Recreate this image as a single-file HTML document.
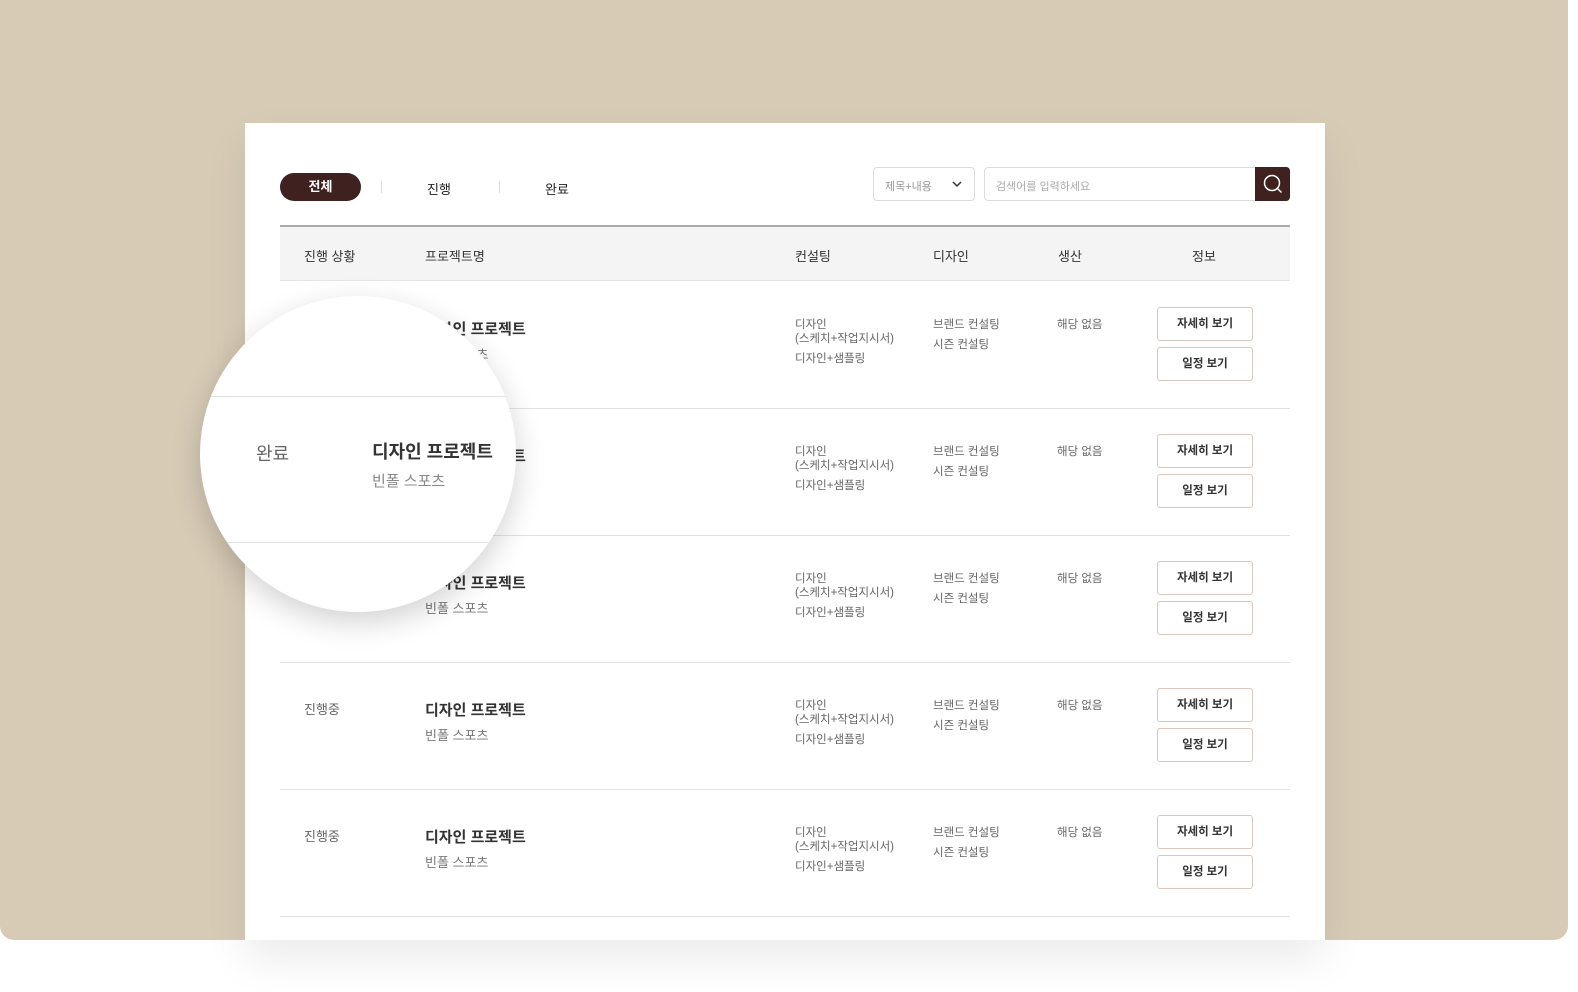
<!DOCTYPE html>
<html><head><meta charset="utf-8"><style>
*{margin:0;padding:0;box-sizing:border-box}
body{width:1578px;height:992px;background:#fff;font-family:"Liberation Sans","Noto Sans CJK KR",sans-serif;position:relative;overflow:hidden;color:#333}
.bg{position:absolute;left:0;top:0;width:1568px;height:940px;background:#d7cbb6;border-radius:0 0 14px 14px}
.panel{position:absolute;left:245px;top:123px;width:1080px;height:817px;background:#fff;box-shadow:0 20px 40px rgba(0,0,0,.08)}
.a{position:absolute;white-space:nowrap}
.tab{font-size:13px;color:#222}
.hdr{position:absolute;left:280px;top:225px;width:1010px;height:56px;background:#f4f4f4;border-top:2px solid #aaa;border-bottom:1px solid #e4e4e4}
.hdr span{position:absolute;top:19px;font-size:13px;color:#333}
.line{position:absolute;left:280px;width:1010px;height:1px;background:#e2e2e2}
.s{font-size:11.5px;color:#666;line-height:14px}
.t{font-size:15px;font-weight:bold;color:#333}
.sub{font-size:13px;color:#777}
.btn{position:absolute;left:1157px;width:96px;height:34px;border:1px solid #d8c8c0;border-radius:3px;font-size:11.5px;font-weight:bold;color:#333;text-align:center;line-height:32px;background:#fff}
.mag{position:absolute;left:200px;top:296px;width:316px;height:316px;border-radius:50%;background:#fff;box-shadow:0 10px 30px rgba(0,0,0,.18);overflow:hidden}
</style></head><body>
<div class="bg"></div>
<div class="panel"></div>
<div class="a" style="left:280px;top:173px;width:81px;height:28px;border-radius:14px;background:#3f2120;color:#fff;font-size:13px;font-weight:bold;text-align:center;line-height:28px">전체</div>
<div class="a" style="left:381px;top:181px;width:1px;height:12px;background:#ddd"></div>
<div class="a" style="left:499px;top:181px;width:1px;height:12px;background:#ddd"></div>
<div class="a tab" style="left:427px;top:179px">진행</div>
<div class="a tab" style="left:545px;top:179px">완료</div>
<div class="a" style="left:873px;top:167px;width:102px;height:34px;border:1px solid #ddd;border-radius:4px;font-size:11px;color:#999;padding:10px 0 0 11px">제목+내용
<svg style="position:absolute;left:77px;top:12px" width="12" height="8" viewBox="0 0 12 8"><path d="M2 2l4 4 4-4" stroke="#333" stroke-width="1.5" fill="none"/></svg></div>
<div class="a" style="left:984px;top:167px;width:306px;height:34px;border:1px solid #ddd;border-radius:4px;font-size:11px;color:#aaa;padding:10px 0 0 11px">검색어를 입력하세요</div>
<div class="a" style="left:1255px;top:167px;width:35px;height:34px;background:#3f2120;border-radius:0 4px 4px 0">
<svg width="35" height="34" viewBox="0 0 35 34"><circle cx="17" cy="16" r="7.5" stroke="#fff" stroke-width="1.5" fill="none"/><path d="M22.5 21.5l4 4" stroke="#fff" stroke-width="1.5"/></svg></div>
<div class="hdr"><span style="left:24px">진행 상황</span><span style="left:145px">프로젝트명</span><span style="left:515px">컨설팅</span><span style="left:653px">디자인</span><span style="left:778px">생산</span><span style="left:912px">정보</span></div>

<div class="line" style="top:408px"></div><div class="line" style="top:535px"></div><div class="line" style="top:662px"></div><div class="line" style="top:789px"></div><div class="line" style="top:916px"></div>

<!-- rows -->
<div id="rows"></div>
<script>
var h='';
[318,445,572,699,826].forEach(function(y,i){
 if(i>=3) h+='<div class="a sub" style="left:304px;top:'+(y-20+20)+'px;font-size:13px;color:#666">진행중</div>';
 h+='<div class="a t" style="left:425px;top:'+(y)+'px">디자인 프로젝트</div>';
 h+='<div class="a sub" style="left:425px;top:'+(y+26)+'px">빈폴 스포츠</div>';
 h+='<div class="a s" style="left:795px;top:'+y+'px">디자인<br>(스케치+작업지시서)<br><span style="display:block;margin-top:6px">디자인+샘플링</span></div>';
 h+='<div class="a s" style="left:933px;top:'+y+'px">브랜드 컨설팅<br><span style="display:block;margin-top:6px">시즌 컨설팅</span></div>';
 h+='<div class="a s" style="left:1057px;top:'+y+'px">해당 없음</div>';
 h+='<div class="btn" style="top:'+(y-11)+'px">자세히 보기</div>';
 h+='<div class="btn" style="top:'+(y+29)+'px">일정 보기</div>';
});
document.getElementById('rows').innerHTML=h;
</script>
<div class="mag">
 <div class="a" style="left:0;top:100px;width:316px;height:1px;background:#e2e2e2"></div>
 <div class="a" style="left:0;top:246px;width:316px;height:1px;background:#e2e2e2"></div>
 <div class="a" style="left:56px;top:144px;font-size:18px;color:#666">완료</div>
 <div class="a" style="left:172px;top:142px;font-size:18px;font-weight:bold;color:#333">디자인 프로젝트</div>
 <div class="a" style="left:172px;top:174px;font-size:15px;color:#888">빈폴 스포츠</div>
</div>
</body></html>
